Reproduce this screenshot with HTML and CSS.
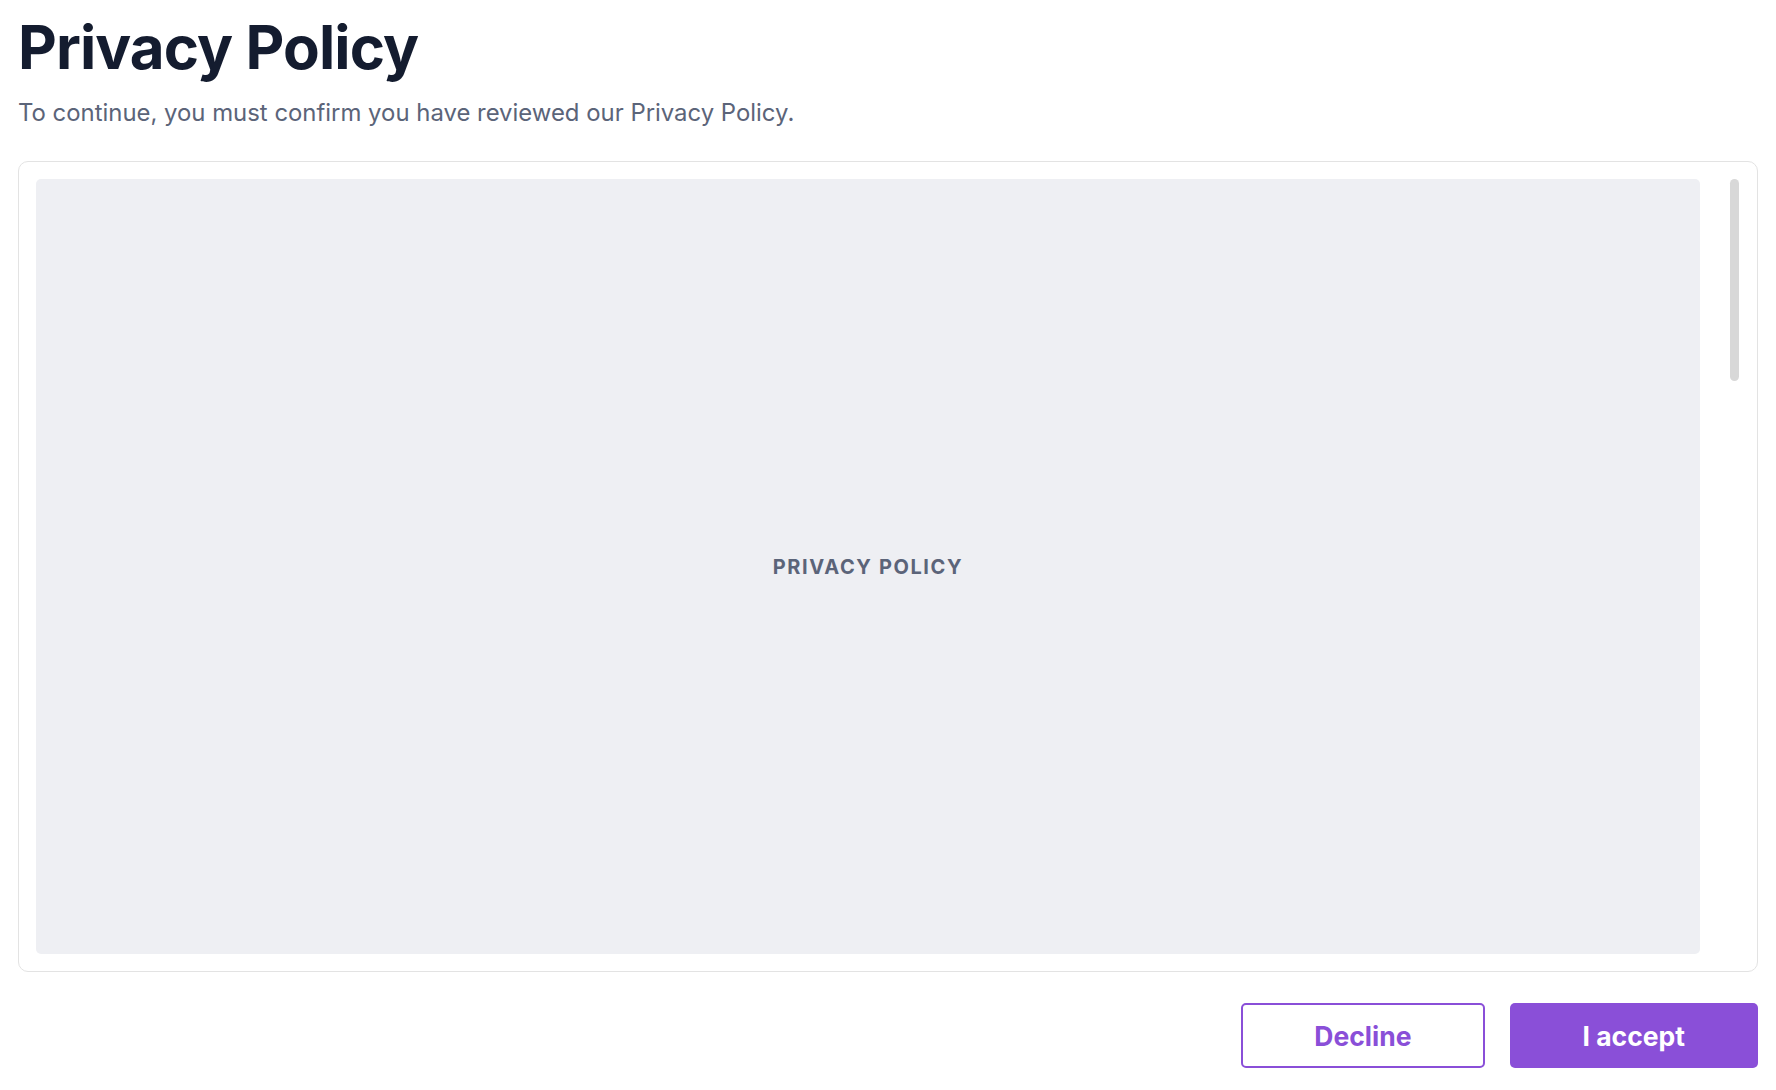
FILE: index.html
```html
<!DOCTYPE html>
<html lang="en">
<head>
<meta charset="utf-8">
<title>Privacy Policy</title>
<link rel="stylesheet" href="styles.css">
</head>
<body>
<main class="page">
  <h1 class="title">Privacy Policy</h1>
  <p class="subtitle">To continue, you must confirm you have reviewed our Privacy Policy.</p>
  <section class="card">
    <div class="doc">
      <span class="doc-label">PRIVACY POLICY</span>
    </div>
    <div class="scrollbar"><div class="thumb"></div></div>
  </section>
  <div class="actions">
    <button class="btn btn-outline" type="button">Decline</button>
    <button class="btn btn-primary" type="button">I accept</button>
  </div>
</main>
</body>
</html>
```

FILE: styles.css
```css
* { box-sizing: border-box; }

html, body {
  margin: 0;
  background: #ffffff;
}

body {
  font-family: Inter, "Noto Sans", "Liberation Sans", sans-serif;
}

.page {
  padding: 17px 18px 0;
}

.title {
  margin: 0;
  font-size: 60px;
  line-height: 60px;
  font-weight: 700;
  color: #141c2f;
  letter-spacing: -0.9px;
}

.subtitle {
  margin: 19px 0 0;
  font-size: 23.9px;
  line-height: 34px;
  font-weight: 400;
  color: #5b6479;
}

.card {
  margin-top: 31px;
  height: 811px;
  border: 1px solid #e3e3e3;
  border-radius: 10px;
  padding: 17px;
  display: flex;
}

.doc {
  flex: 1;
  background: #eeeff3;
  border-radius: 5px;
  display: flex;
  align-items: center;
  justify-content: center;
}

.doc-label {
  font-size: 20px;
  font-weight: 700;
  letter-spacing: 1.6px;
  color: #5b6479;
}

.scrollbar {
  width: 40px;
  display: flex;
  justify-content: flex-end;
  padding-right: 1px;
}

.thumb {
  width: 9px;
  height: 202px;
  border-radius: 5px;
  background: #d8d8d8;
}

.actions {
  margin-top: 31px;
  display: flex;
  justify-content: flex-end;
  gap: 25px;
}

.btn {
  height: 65px;
  border-radius: 5px;
  font-family: Inter, "Noto Sans", "Liberation Sans", sans-serif;
  font-size: 26.5px;
  font-weight: 700;
  cursor: pointer;
}

.btn-outline {
  background: #ffffff;
  border: 2px solid #8a4fd8;
  color: #8a4fd8;
  padding: 0 71px;
}

.btn-primary {
  background: #8a4fd8;
  border: 0;
  color: #ffffff;
  padding: 0 73px;
}
```
